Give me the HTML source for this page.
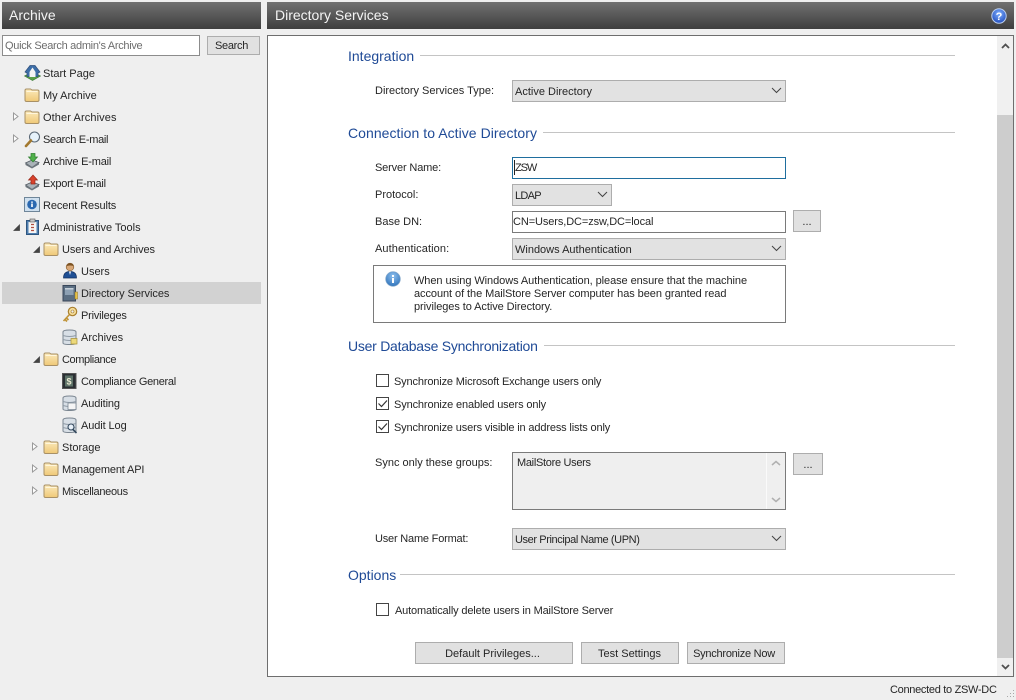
<!DOCTYPE html>
<html><head><meta charset="utf-8"><title>Directory Services</title>
<style>
html,body{margin:0;padding:0;width:1016px;height:700px;overflow:hidden;background:#efefef}
body{position:relative;font-family:"Liberation Sans",sans-serif;font-size:11px;color:#262626}
.a,.t,.h,.b,svg.i{position:absolute}
.t{white-space:nowrap;line-height:16px;height:16px;margin-top:1px}
.hd{position:absolute;top:2px;height:27px;background:linear-gradient(#717171,#3e3e3e);color:#f4f4f4;font-size:14px;line-height:27px}
.h{white-space:nowrap;color:#1f4a96;font-size:14px;line-height:18px;height:18px;background:#fff;padding-right:6px}
.ln{position:absolute;left:348px;width:607px;height:1px;background:#c4c4c4}
.c{position:absolute;box-sizing:border-box;height:22px;background:#e2e2e2;border:1px solid #adadad;line-height:22px;padding-left:2px;white-space:nowrap}
.c svg{position:absolute;right:3px;top:6px}
.in{position:absolute;box-sizing:border-box;height:22px;background:#fff;border:1px solid #7a7a7a;line-height:20px;padding-left:0;white-space:nowrap}
.b{box-sizing:border-box;height:22px;background:#e1e1e1;border:1px solid #adadad;text-align:center;line-height:22px;white-space:nowrap}
.k{position:absolute;left:376px;width:13px;height:13px;box-sizing:border-box;background:#fff;border:1px solid #444}
</style></head><body>
<svg width="0" height="0" style="position:absolute"><defs>
<linearGradient id="fg" x1="0" y1="0" x2="0" y2="1"><stop offset="0" stop-color="#fbeabc"/><stop offset="1" stop-color="#efc877"/></linearGradient>
<symbol id="folder" viewBox="0 0 16 16"><path d="M1 3.500Q1 2 2.500 2H6.500L8 3H13.500Q15 3 15 4.500V13Q15 14.500 13.500 14.500H2.500Q1 14.500 1 13Z" fill="url(#fg)" stroke="#a89066"/><path d="M2.500 4.500H13.500" stroke="#fff6dc"/></symbol>
<symbol id="open" viewBox="0 0 9 9"><path d="M1.500 1L6 4.500L1.500 8Z" fill="#fff" stroke="#9a9a9a"/></symbol>
<symbol id="exp" viewBox="0 0 9 9"><path d="M7.500 2V7.500H2Z" fill="#444" stroke="#444" stroke-width=".8"/></symbol>
<symbol id="chev" viewBox="0 0 11 7"><path d="M1 1L5.500 5.500L10 1" fill="none" stroke="#444" stroke-width="1"/></symbol>
<symbol id="db" viewBox="0 0 16 16"><path d="M1 3Q1 1 7.500 1T14 3V14Q14 15.500 7.500 15.500T1 14Z" fill="#d8dfe6" stroke="#7a8590"/><path d="M1 6.500Q7.500 8.500 14 6.500M1 10.500Q7.500 12.500 14 10.500" fill="none" stroke="#8f9aa5"/></symbol>
</defs></svg>

<div class="hd" style="left:2px;width:259px;padding-left:7px;box-sizing:border-box">Archive</div>
<div class="hd" style="left:267px;width:747px;padding-left:8px;box-sizing:border-box">Directory Services</div>
<svg class="i" style="left:991px;top:8px" width="16" height="16" viewBox="0 0 16 16"><defs><radialGradient id="hb" cx=".5" cy=".35" r=".7"><stop offset="0" stop-color="#7fb0ff"/><stop offset="1" stop-color="#1b46b8"/></radialGradient></defs><circle cx="8" cy="8" r="7.200" fill="url(#hb)" stroke="#bcd0f0"/><text x="8" y="12" font-family="Liberation Sans" font-weight="bold" font-size="11" fill="#fff" text-anchor="middle">?</text></svg>

<div class="in" style="left:2px;top:35px;width:198px;height:21px;border-color:#8c8c8c;color:#6d6d6d;line-height:20px;padding-left:2px;letter-spacing:-.3px">Quick Search admin's Archive</div>
<div class="b" style="left:207px;top:36px;width:53px;height:19px;line-height:18px;letter-spacing:-.3px;padding-right:4px">Search</div>

<div class="a" style="left:2px;top:282px;width:259px;height:22px;background:#d2d2d2"></div>

<!-- Tree icons -->
<svg class="i" style="left:24px;top:64px" width="17" height="17" viewBox="0 0 17 17"><path d="M0.500 12L8.500 16.500L16.500 12L8.500 8Z" fill="#5aa04a" stroke="#3a7a34" stroke-width=".7"/><path d="M1 8L6 1.500H11L16 8L14 9V12.500H3V9Z" fill="#3d6ea8" stroke="#30507c" stroke-width=".7"/><path d="M5.500 8L8.500 3.500L11.500 8V13H5.500Z" fill="#f4f4f4"/></svg>
<svg class="i" style="left:24px;top:87px" width="16" height="16"><use href="#folder"/></svg>
<svg class="i" style="left:24px;top:109px" width="16" height="16"><use href="#folder"/></svg>
<svg class="i" style="left:24px;top:131px" width="17" height="17" viewBox="0 0 17 17"><circle cx="10.500" cy="6" r="5" fill="#e6f2fb" stroke="#5c6a78" stroke-width="1.100"/><path d="M7 9.500L2 15" stroke="#a3792f" stroke-width="2.600" stroke-linecap="round"/></svg>
<svg class="i" style="left:24px;top:152px" width="17" height="17" viewBox="0 0 17 17"><path d="M1.500 11L8 8L15 10.500L8 15.500Z" fill="#aab2b8" stroke="#525a62" stroke-width=".8"/><path d="M1.500 11V13L8 16.500L15 12.500V10.500L8 15Z" fill="#6d757c"/><path d="M7 1.500H11V5H13.500L9 10L4.500 5H7Z" fill="#4fb04a" stroke="#2f7d2f" stroke-width=".7"/></svg>
<svg class="i" style="left:24px;top:174px" width="17" height="17" viewBox="0 0 17 17"><path d="M1.500 11L8 8L15 10.500L8 15.500Z" fill="#aab2b8" stroke="#525a62" stroke-width=".8"/><path d="M1.500 11V13L8 16.500L15 12.500V10.500L8 15Z" fill="#6d757c"/><path d="M7 10V6H4.500L9 1L13.500 6H11V10Z" fill="#d9422c" stroke="#962a1b" stroke-width=".7"/></svg>
<svg class="i" style="left:24px;top:197px" width="16" height="16" viewBox="0 0 16 16"><rect x=".5" y=".5" width="15" height="14" fill="#cfe0ef" stroke="#6f8699"/><circle cx="8" cy="7.500" r="4.800" fill="#2a68b0"/><rect x="7.200" y="6.500" width="1.600" height="3.500" fill="#fff"/><rect x="7.200" y="4.500" width="1.600" height="1.300" fill="#fff"/></svg>
<svg class="i" style="left:25px;top:218px" width="15" height="17" viewBox="0 0 15 17"><rect x="1.500" y="2.500" width="12" height="14" fill="#4f7fb0" stroke="#2f5680"/><rect x="3.500" y="4" width="8" height="11" fill="#f5f5f5"/><rect x="5" y="1" width="5" height="3" fill="#c8c8c8" stroke="#555" stroke-width=".6"/><path d="M6 6.500H9M6 9.500H9M6 12.500H9" stroke="#b05040" stroke-width="1.200"/></svg>
<svg class="i" style="left:43px;top:241px" width="16" height="16"><use href="#folder"/></svg>
<svg class="i" style="left:62px;top:262px" width="16" height="17" viewBox="0 0 16 17"><circle cx="8" cy="5" r="3.800" fill="#d8a878" stroke="#8a6034" stroke-width=".7"/><path d="M5 3Q7 0 11 2L11.500 4Q8 3 5 4Z" fill="#7d5424"/><path d="M1.500 16Q1.500 9.500 8 9.500T14.500 16Z" fill="#1f4f94" stroke="#14305e" stroke-width=".7"/><path d="M7 9.500L8 13L9 9.500Z" fill="#fff"/></svg>
<svg class="i" style="left:62px;top:285px" width="16" height="17" viewBox="0 0 16 17"><rect x="1" y=".5" width="12.500" height="15.500" fill="#5b6e82" stroke="#39475a"/><rect x="3" y="3" width="8.500" height="7" fill="#8da0b3"/><rect x="3" y="3" width="8.500" height="1.500" fill="#c6d0d8"/><rect x="13" y="7" width="2.500" height="7" fill="#e8c348" stroke="#927520" stroke-width=".5"/></svg>
<svg class="i" style="left:62px;top:306px" width="16" height="17" viewBox="0 0 16 17"><circle cx="10.500" cy="5.500" r="4.200" fill="#f5dd9a" stroke="#a97f2e" stroke-width="1.200"/><circle cx="10.500" cy="5.500" r="1.500" fill="#efefef" stroke="#a97f2e" stroke-width=".6"/><path d="M7.500 8.500L1.500 15M3 13.500L5 15.500M4.500 12L6.500 14" stroke="#c09438" stroke-width="1.600"/></svg>
<svg class="i" style="left:62px;top:329px" width="16" height="16"><use href="#db"/><path d="M9 9.500H15V15H9Z" fill="#ecd97a" stroke="#a8923c" stroke-width=".7"/></svg>
<svg class="i" style="left:43px;top:351px" width="16" height="16"><use href="#folder"/></svg>
<svg class="i" style="left:62px;top:373px" width="15" height="16" viewBox="0 0 15 16"><rect x=".5" y=".5" width="13.500" height="15" fill="#2a2f33" stroke="#555"/><rect x="3" y="2.500" width="8" height="11" fill="#5d7268"/><text x="7" y="11.500" font-family="Liberation Sans" font-weight="bold" font-size="9" fill="#e8e8d0" text-anchor="middle">$</text></svg>
<svg class="i" style="left:62px;top:395px" width="16" height="16"><use href="#db"/><path d="M6 8H14V14.500H6Z" fill="#f5f5f5" stroke="#7b8793" stroke-width=".8"/></svg>
<svg class="i" style="left:62px;top:417px" width="16" height="17" viewBox="0 0 16 17"><use href="#db" width="16" height="16"/><circle cx="9" cy="10" r="3" fill="#e8f0f8" stroke="#34495e" stroke-width="1.100"/><path d="M11 12.500L14.500 16" stroke="#34495e" stroke-width="1.600"/></svg>
<svg class="i" style="left:43px;top:439px" width="16" height="16"><use href="#folder"/></svg>
<svg class="i" style="left:43px;top:461px" width="16" height="16"><use href="#folder"/></svg>
<svg class="i" style="left:43px;top:483px" width="16" height="16"><use href="#folder"/></svg>

<svg class="i" style="left:12px;top:112px" width="9" height="9"><use href="#open"/></svg>
<svg class="i" style="left:12px;top:134px" width="9" height="9"><use href="#open"/></svg>
<svg class="i" style="left:12px;top:223px" width="9" height="9"><use href="#exp"/></svg>
<svg class="i" style="left:32px;top:245px" width="9" height="9"><use href="#exp"/></svg>
<svg class="i" style="left:32px;top:355px" width="9" height="9"><use href="#exp"/></svg>
<svg class="i" style="left:31px;top:442px" width="9" height="9"><use href="#open"/></svg>
<svg class="i" style="left:31px;top:464px" width="9" height="9"><use href="#open"/></svg>
<svg class="i" style="left:31px;top:486px" width="9" height="9"><use href="#open"/></svg>

<div class="t" style="left:43px;top:65px">Start Page</div>
<div class="t" style="left:43px;top:87px">My Archive</div>
<div class="t" style="left:43px;top:109px;letter-spacing:.1px">Other Archives</div>
<div class="t" style="left:43px;top:131px;letter-spacing:-.3px">Search E-mail</div>
<div class="t" style="left:43px;top:153px;letter-spacing:-.2px">Archive E-mail</div>
<div class="t" style="left:43px;top:175px;letter-spacing:-.25px">Export E-mail</div>
<div class="t" style="left:43px;top:197px;letter-spacing:-.1px">Recent Results</div>
<div class="t" style="left:43px;top:219px">Administrative Tools</div>
<div class="t" style="left:62px;top:241px;letter-spacing:-.1px">Users and Archives</div>
<div class="t" style="left:81px;top:263px">Users</div>
<div class="t" style="left:81px;top:285px;letter-spacing:-.05px">Directory Services</div>
<div class="t" style="left:81px;top:307px;letter-spacing:-.2px">Privileges</div>
<div class="t" style="left:81px;top:329px">Archives</div>
<div class="t" style="left:62px;top:351px;letter-spacing:-.4px">Compliance</div>
<div class="t" style="left:81px;top:373px;letter-spacing:-.3px">Compliance General</div>
<div class="t" style="left:81px;top:395px;letter-spacing:-.1px">Auditing</div>
<div class="t" style="left:81px;top:417px;letter-spacing:-.1px">Audit Log</div>
<div class="t" style="left:62px;top:439px">Storage</div>
<div class="t" style="left:62px;top:461px;letter-spacing:-.15px">Management API</div>
<div class="t" style="left:62px;top:483px;letter-spacing:-.3px">Miscellaneous</div>

<!-- Content panel -->
<div class="a" style="left:267px;top:35px;width:747px;height:642px;box-sizing:border-box;background:#fff;border:1px solid #6e6e6e"></div>
<div class="a" style="left:997px;top:36px;width:16px;height:640px;background:#f0f0f0"></div>
<div class="a" style="left:997px;top:115px;width:16px;height:543px;background:#cdcdcd"></div>
<svg class="i" style="left:1001px;top:43px" width="9" height="6" viewBox="0 0 9 6"><path d="M1 5L4.500 1.500L8 5" fill="none" stroke="#505050" stroke-width="1.800"/></svg>
<svg class="i" style="left:1001px;top:664px" width="9" height="6" viewBox="0 0 9 6"><path d="M1 1L4.500 4.500L8 1" fill="none" stroke="#505050" stroke-width="1.800"/></svg>

<div class="ln" style="top:55px"></div>
<div class="ln" style="top:132px"></div>
<div class="ln" style="top:345px"></div>
<div class="ln" style="top:574px"></div>
<div class="h" style="left:348px;top:47px">Integration</div>
<div class="h" style="left:348px;top:124px;letter-spacing:.05px">Connection to Active Directory</div>
<div class="h" style="left:348px;top:337px;letter-spacing:-.25px">User Database Synchronization</div>
<div class="h" style="left:348px;top:566px;padding-right:4px">Options</div>

<div class="t" style="left:375px;top:82px">Directory Services Type:</div>
<div class="c" style="left:512px;top:80px;width:274px">Active Directory<svg width="11" height="7"><use href="#chev"/></svg></div>

<div class="t" style="left:375px;top:159px;letter-spacing:-.15px">Server Name:</div>
<div class="in" style="left:512px;top:157px;width:274px;border-color:#1f6e9e;padding-left:2px;letter-spacing:-1.1px">ZSW</div>
<div class="a" style="left:514px;top:160px;width:1px;height:15px;background:#222"></div>
<div class="t" style="left:375px;top:186px">Protocol:</div>
<div class="c" style="left:512px;top:184px;width:100px;letter-spacing:-.7px">LDAP<svg width="11" height="7"><use href="#chev"/></svg></div>
<div class="t" style="left:375px;top:213px">Base DN:</div>
<div class="in" style="left:512px;top:211px;width:274px;letter-spacing:-.1px">CN=Users,DC=zsw,DC=local</div>
<div class="b" style="left:793px;top:210px;width:28px">...</div>
<div class="t" style="left:375px;top:240px;letter-spacing:.1px">Authentication:</div>
<div class="c" style="left:512px;top:238px;width:274px">Windows Authentication<svg width="11" height="7"><use href="#chev"/></svg></div>

<div class="a" style="left:373px;top:265px;width:413px;height:58px;box-sizing:border-box;border:1px solid #7a7a7a;background:#fff"></div>
<svg class="i" style="left:385px;top:271px" width="16" height="16" viewBox="0 0 16 16"><defs><radialGradient id="ib" cx=".5" cy=".3" r=".75"><stop offset="0" stop-color="#8fc0ee"/><stop offset="1" stop-color="#2a6fb8"/></radialGradient></defs><circle cx="8" cy="8" r="7.300" fill="url(#ib)" stroke="#7da3c8" stroke-width=".7"/><rect x="7" y="7" width="2" height="5" fill="#fff"/><rect x="7" y="4" width="2" height="2" fill="#fff"/></svg>
<div class="a" style="left:414px;top:275px;font-size:11px;line-height:13px;white-space:nowrap;letter-spacing:-.07px">When using Windows Authentication, please ensure that the machine<br>account of the MailStore Server computer has been granted read<br>privileges to Active Directory.</div>

<div class="k" style="top:374px"></div>
<div class="t" style="left:394px;top:373px;letter-spacing:-.15px">Synchronize Microsoft Exchange users only</div>
<div class="k" style="top:397px"></div>
<svg class="i" style="left:376px;top:397px" width="13" height="13"><path d="M2.500 6.500L5.500 9.500L11 3.500" fill="none" stroke="#333" stroke-width="1.200"/></svg>
<div class="t" style="left:394px;top:396px;letter-spacing:-.13px">Synchronize enabled users only</div>
<div class="k" style="top:420px"></div>
<svg class="i" style="left:376px;top:420px" width="13" height="13"><path d="M2.500 6.500L5.500 9.500L11 3.500" fill="none" stroke="#333" stroke-width="1.200"/></svg>
<div class="t" style="left:394px;top:419px;letter-spacing:-.15px">Synchronize users visible in address lists only</div>

<div class="t" style="left:375px;top:454px">Sync only these groups:</div>
<div class="a" style="left:512px;top:452px;width:274px;height:58px;box-sizing:border-box;background:#efefef;border:1px solid #7a7a7a"></div>
<div class="a" style="left:766px;top:453px;width:1px;height:56px;background:#fafafa"></div>
<div class="t" style="left:517px;top:454px;letter-spacing:-.3px">MailStore Users</div>
<svg class="i" style="left:771px;top:460px" width="10" height="6" viewBox="0 0 10 6"><path d="M1 5L5 1.500L9 5" fill="none" stroke="#b0b0b0" stroke-width="1.500"/></svg>
<svg class="i" style="left:771px;top:497px" width="10" height="6" viewBox="0 0 10 6"><path d="M1 1L5 4.500L9 1" fill="none" stroke="#b0b0b0" stroke-width="1.500"/></svg>
<div class="b" style="left:793px;top:453px;width:30px">...</div>

<div class="t" style="left:375px;top:530px;letter-spacing:-.2px">User Name Format:</div>
<div class="c" style="left:512px;top:528px;width:274px;letter-spacing:-.4px">User Principal Name (UPN)<svg width="11" height="7"><use href="#chev"/></svg></div>

<div class="k" style="top:603px"></div>
<div class="t" style="left:395px;top:602px;letter-spacing:-.15px">Automatically delete users in MailStore Server</div>

<div class="b" style="left:415px;top:642px;width:158px;padding-right:3px">Default Privileges...</div>
<div class="b" style="left:581px;top:642px;width:98px;padding-right:1px">Test Settings</div>
<div class="b" style="left:687px;top:642px;width:98px;letter-spacing:-.25px;padding-right:4px">Synchronize Now</div>

<div class="t" style="left:890px;top:681px;letter-spacing:-.3px">Connected to ZSW-DC</div>
<svg class="i" style="left:1004px;top:688px" width="11" height="11"><path d="M9 2h1v1H9zM6 5h1v1H6zM9 5h1v1H9zM3 8h1v1H3zM6 8h1v1H6zM9 8h1v1H9z" fill="#a8a8a8"/></svg>
</body></html>
